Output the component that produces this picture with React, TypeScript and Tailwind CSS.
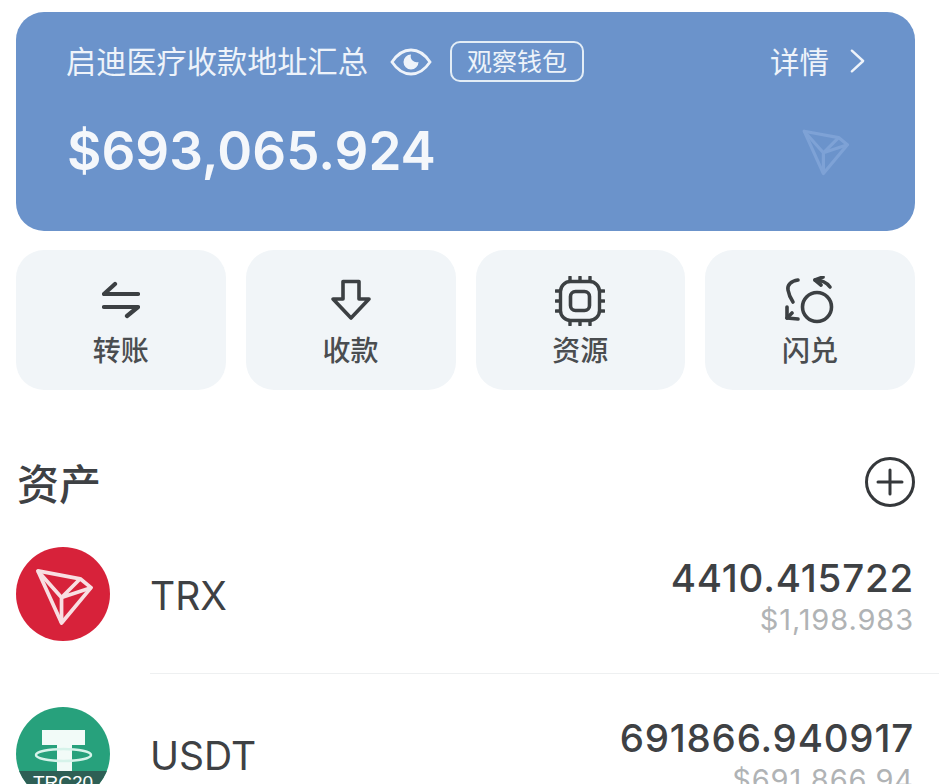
import { ReactNode } from "react";

const CJK = "font-['Noto_Sans_CJK_SC','Liberation_Sans',sans-serif]";

function TronMark({ className, strokeWidth = 4 }: { className?: string; strokeWidth?: number }) {
  return (
    <svg viewBox="0 0 60 60" fill="none" stroke="currentColor" strokeWidth={strokeWidth} strokeLinejoin="round" className={className}>
      <path d="M4 4 L47 12 L58 21 L28 57 Z" />
      <path d="M4 4 L28 31 L28 57" />
      <path d="M28 31 L47 12 M28 31 L58 21" />
    </svg>
  );
}

function ActionCard({ label, children }: { label: string; children: ReactNode }) {
  return (
    <div className="flex h-[140px] flex-col items-center rounded-[28px] bg-[#f1f5f8] pt-[24px]">
      <div className="flex h-[54px] items-center justify-center text-[#3c4043]">{children}</div>
      <span className={`mt-[3px] text-[28px] font-medium leading-[36px] text-[#4a4d50] ${CJK}`}>{label}</span>
    </div>
  );
}

export default function App() {
  return (
    <div className="h-[784px] w-[939px] overflow-hidden bg-white pl-[16px] pt-[12px]">
      {/* balance card */}
      <div className="mr-[24px] h-[219px] rounded-[28px] bg-[#6b93cb] pl-[50px] pr-[50px] pt-[29px] text-[#eef3fa]">
        <div className="flex h-[41px] items-center">
          <span className={`w-[302px] pb-[3px] text-[30.2px] leading-[40px] ${CJK}`}>启迪医疗收款地址汇总</span>
          <svg viewBox="0 0 42 30" fill="none" className="ml-[22px] h-[30px] w-[42px]">
            <path d="M2 15 C8 6 14 3 21 3 C28 3 34 6 40 15 C34 24 28 27 21 27 C14 27 8 24 2 15 Z" stroke="currentColor" strokeWidth="2.8" />
            <path d="M21 7.5 A7.5 7.5 0 1 0 28.5 15 A6 6 0 0 1 21 7.5 Z" fill="currentColor" />
          </svg>
          <span className={`ml-[18px] flex h-[41px] w-[134px] items-center justify-center rounded-[10px] border-2 border-[#e3edf6] pb-[2px] text-[25px] leading-none ${CJK}`}>
            观察钱包
          </span>
          <span className={`ml-auto pb-[3px] text-[29.5px] leading-[40px] ${CJK}`}>详情</span>
          <svg viewBox="0 0 16 26" fill="none" stroke="currentColor" strokeWidth="2.6" strokeLinecap="round" strokeLinejoin="round" className="mb-[2px] ml-[21px] h-[26px] w-[15px]">
            <path d="M2 2 L14 13 L2 24" />
          </svg>
        </div>
        <div className="mt-[39px] flex items-center justify-between">
          <span className="pl-[1px] font-['Inter',sans-serif] text-[53px] font-semibold leading-[60px] text-[#f4f7fb]">
            $693,065.924
          </span>
          <TronMark className="mr-[16px] mt-[2px] h-[50px] w-[48px] text-[#7ea2d6]" strokeWidth={4} />
        </div>
      </div>

      {/* actions */}
      <div className="mr-[24px] mt-[19px] grid grid-cols-4 gap-[20px]">
        <ActionCard label="转账">
          <svg viewBox="0 0 38 38" fill="none" stroke="currentColor" strokeWidth="4.2" strokeLinecap="round" strokeLinejoin="round" className="mb-[3px] h-[38px] w-[38px]">
            <path d="M13 3 L2 13 H36" />
            <path d="M2 26 H36 L25 35" />
          </svg>
        </ActionCard>
        <ActionCard label="收款">
          <svg viewBox="0 0 42 42" fill="none" stroke="currentColor" strokeWidth="3.6" strokeLinejoin="round" className="mb-[3px] h-[42px] w-[42px]">
            <path d="M13 2.5 H29 V20 H39 L21 39 L3 20 H13 Z" />
          </svg>
        </ActionCard>
        <ActionCard label="资源">
          <svg viewBox="0 0 50 50" fill="none" stroke="currentColor" strokeWidth="3.4" strokeLinecap="round" className="h-[50px] w-[50px]">
            <rect x="5.5" y="5.5" width="39" height="39" rx="10" />
            <rect x="15.5" y="15.5" width="19" height="19" rx="5" strokeWidth="3.6" />
            <path d="M15 1 V4 M25 1 V4 M35 1 V4 M15 46 V49 M25 46 V49 M35 46 V49 M1 15 H4 M1 25 H4 M1 35 H4 M46 15 H49 M46 25 H49 M46 35 H49" />
          </svg>
        </ActionCard>
        <ActionCard label="闪兑">
          <svg viewBox="0 0 50 50" fill="none" stroke="currentColor" strokeWidth="3.6" strokeLinecap="round" strokeLinejoin="round" className="h-[50px] w-[50px]">
            <circle cx="32" cy="31" r="14.5" />
            <path d="M13 4 C6 5 2 9 3 14 C4 20 6 23 8 26" />
            <path d="M2 31 L2 42 L13 43" />
            <path d="M2 42 L7 37" />
            <path d="M30 4 C36 4 42 7 45 11" />
            <path d="M38 1 L30 4 L36 9" />
          </svg>
        </ActionCard>
      </div>

      {/* assets header */}
      <div className="mr-[24px] mt-[67px] flex h-[50px] items-center justify-between">
        <span className={`pl-[1px] text-[42px] font-medium leading-[50px] text-[#3e4144] ${CJK}`}>资产</span>
        <svg viewBox="0 0 50 50" fill="none" stroke="#35383b" strokeWidth="3" strokeLinecap="round" className="h-[50px] w-[50px]">
          <circle cx="25" cy="25" r="23.5" />
          <path d="M13 25 H37 M25 13 V37" />
        </svg>
      </div>

      {/* asset rows */}
      <div className="mt-[40px] flex h-[127px] items-start">
        <div className="flex h-[94px] w-[94px] shrink-0 items-center justify-center rounded-full bg-[#d7223a] text-[#f8dfe2]">
          <TronMark className="ml-[1px] mt-[5px] h-[59px] w-[59px]" strokeWidth={3.8} />
        </div>
        <div className="ml-[40px] flex h-[127px] flex-1 items-start justify-between border-b border-[#eef0f1] pr-[25px] font-['Inter',sans-serif]">
          <span className="mt-[25px] text-[39px] leading-[48px] text-[#3e4144]">TRX</span>
          <div className="mt-[7px] flex flex-col items-end">
            <span className="text-[38.5px] font-[450] leading-[48px] tracking-[0.8px] text-[#3e4144]">4410.415722</span>
            <span className="text-[29px] leading-[36px] tracking-[0.9px] text-[#b0b3b5]">$1,198.983</span>
          </div>
        </div>
      </div>
      <div className="mt-[33px] flex items-start">
        <div className="relative h-[94px] w-[94px] shrink-0 overflow-hidden rounded-full bg-[#27a17c]">
          <svg viewBox="0 0 94 94" className="absolute inset-0 h-[94px] w-[94px]">
            <path d="M26 23 H69 V38 H56 V80 H41 V38 H26 Z" fill="#f2fbf8" />
            <ellipse cx="47.5" cy="48" rx="27.5" ry="6" fill="none" stroke="#d6f3ea" strokeWidth="2.5" />
          </svg>
          <div className="absolute inset-x-0 bottom-0 h-[30px] bg-[#2e5f55] text-center font-['Liberation_Sans',sans-serif] text-[19px] leading-[24px] text-white">
            TRC20
          </div>
        </div>
        <div className="ml-[40px] flex flex-1 items-start justify-between pr-[25px] font-['Inter',sans-serif]">
          <span className="mt-[25px] text-[39px] leading-[48px] text-[#3e4144]">USDT</span>
          <div className="mt-[7px] flex flex-col items-end">
            <span className="text-[38.5px] font-[450] leading-[48px] tracking-[0.8px] text-[#3e4144]">691866.940917</span>
            <span className="text-[29px] leading-[36px] tracking-[0.9px] text-[#b0b3b5]">$691,866.94</span>
          </div>
        </div>
      </div>
    </div>
  );
}
